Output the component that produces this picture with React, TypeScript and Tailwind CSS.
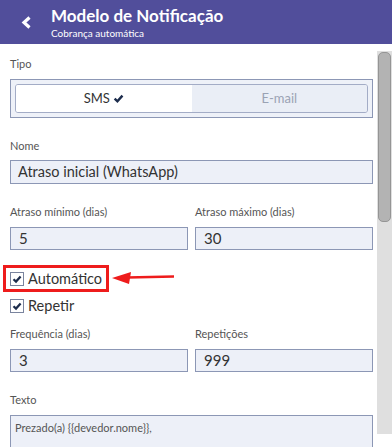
import React from 'react';

const font = { fontFamily: 'Lato, "Open Sans", sans-serif' };

const Check = ({ size = 10 }: { size?: number }) => (
  <svg width={size} height={size} viewBox="0 0 10 10">
    <polyline points="1.5,5.2 4,7.6 8.6,2.4" fill="none" stroke="#1c2c4c" strokeWidth="2.2" />
  </svg>
);

const Label = ({ children }: { children: React.ReactNode }) => (
  <div className="text-[11px] leading-[14px] text-[#555]">{children}</div>
);

const Field = ({ value }: { value: string }) => (
  <div className="mt-[8px] h-[23px] border border-[#8c97b5] bg-[#edf0f8] px-[8px] text-[15px] leading-[21px] text-[#333]">
    {value}
  </div>
);

const CheckRow = ({ label, children }: { label: string; children?: React.ReactNode }) => (
  <div className="relative flex h-[27px] items-center gap-[4px]">
    <span className="flex h-[14px] w-[14px] items-center justify-center border border-[#7a849e] bg-white">
      <Check />
    </span>
    <span className="text-[14.5px] text-[#333]">{label}</span>
    {children}
  </div>
);

export default function App() {
  return (
    <div className="h-[447px] w-[392px] overflow-hidden bg-white" style={font}>
      <header className="flex h-[44px] items-center bg-[#514e9b] pl-[21px]">
        <svg width="11" height="13" viewBox="0 0 11 13" className="mr-[19px]">
          <polyline points="8.5,1.5 3,6.5 8.5,11.5" fill="none" stroke="#fff" strokeWidth="3.2" />
        </svg>
        <div className="flex flex-col">
          <span className="text-[17px] font-bold leading-[22px] text-white">Modelo de Notificação</span>
          <span className="text-[10px] leading-[12px] text-white">Cobrança automática</span>
        </div>
      </header>

      <div className="flex">
        <div className="flex-1 pl-[10px] pr-[4px] pt-[13px]">
          <Label>Tipo</Label>
          <div className="mt-[8px] h-[39px] border border-[#8c97b5] bg-[#eef1f8] p-[4px]">
            <div className="flex h-full overflow-hidden rounded-[3px] border border-[#a3acc6]">
              <div className="flex flex-1 items-center justify-center gap-[3px] bg-white text-[13px] text-[#333]">
                SMS <Check size={11} />
              </div>
              <div className="flex flex-1 items-center justify-center bg-[#eaeef6] text-[13px] text-[#9aa2b4]">
                E-mail
              </div>
            </div>
          </div>

          <div className="mt-[21px]">
            <Label>Nome</Label>
          </div>
          <div className="mt-[7px] h-[24px] border border-[#8c97b5] bg-[#edf0f8] px-[7px] text-[14.5px] leading-[22px] text-[#333]">
            Atraso inicial (WhatsApp)
          </div>

          <div className="mt-[21px] grid grid-cols-2 gap-x-[7px]">
            <div>
              <Label>Atraso mínimo (dias)</Label>
              <Field value="5" />
            </div>
            <div>
              <Label>Atraso máximo (dias)</Label>
              <Field value="30" />
            </div>
          </div>

          <div className="mt-[15px]">
            <CheckRow label="Automático">
              <div className="absolute left-[-7px] top-0 h-[27px] w-[106px] border-[3px] border-[#ee1c1c]" />
              <svg width="64" height="14" viewBox="0 0 64 14" className="absolute left-[101px] top-[6px]">
                <line x1="16" y1="6.5" x2="63" y2="5.5" stroke="#ee1c1c" strokeWidth="2.5" />
                <polygon points="1,7 20,1 18,13" fill="#ee1c1c" />
              </svg>
            </CheckRow>
            <CheckRow label="Repetir" />
          </div>

          <div className="mt-[8px] grid grid-cols-2 gap-x-[7px]">
            <div>
              <Label>Frequência (dias)</Label>
              <Field value="3" />
            </div>
            <div>
              <Label>Repetições</Label>
              <Field value="999" />
            </div>
          </div>

          <div className="mt-[21px]">
            <Label>Texto</Label>
          </div>
          <div className="mt-[8px] h-[60px] border border-[#8c97b5] bg-[#edf0f8] px-[4px] pt-[4px] text-[11px] text-[#555]">
            Prezado(a) {'{{devedor.nome}}'},
          </div>
        </div>

        <div className="mt-[7px] h-[383px] w-[15px] bg-[#dfdfdf] px-[1px] pt-[1px]">
          <div className="h-[170px] rounded-[5px] border border-[#959595] bg-[#b3b3b3]" />
        </div>
      </div>
    </div>
  );
}
